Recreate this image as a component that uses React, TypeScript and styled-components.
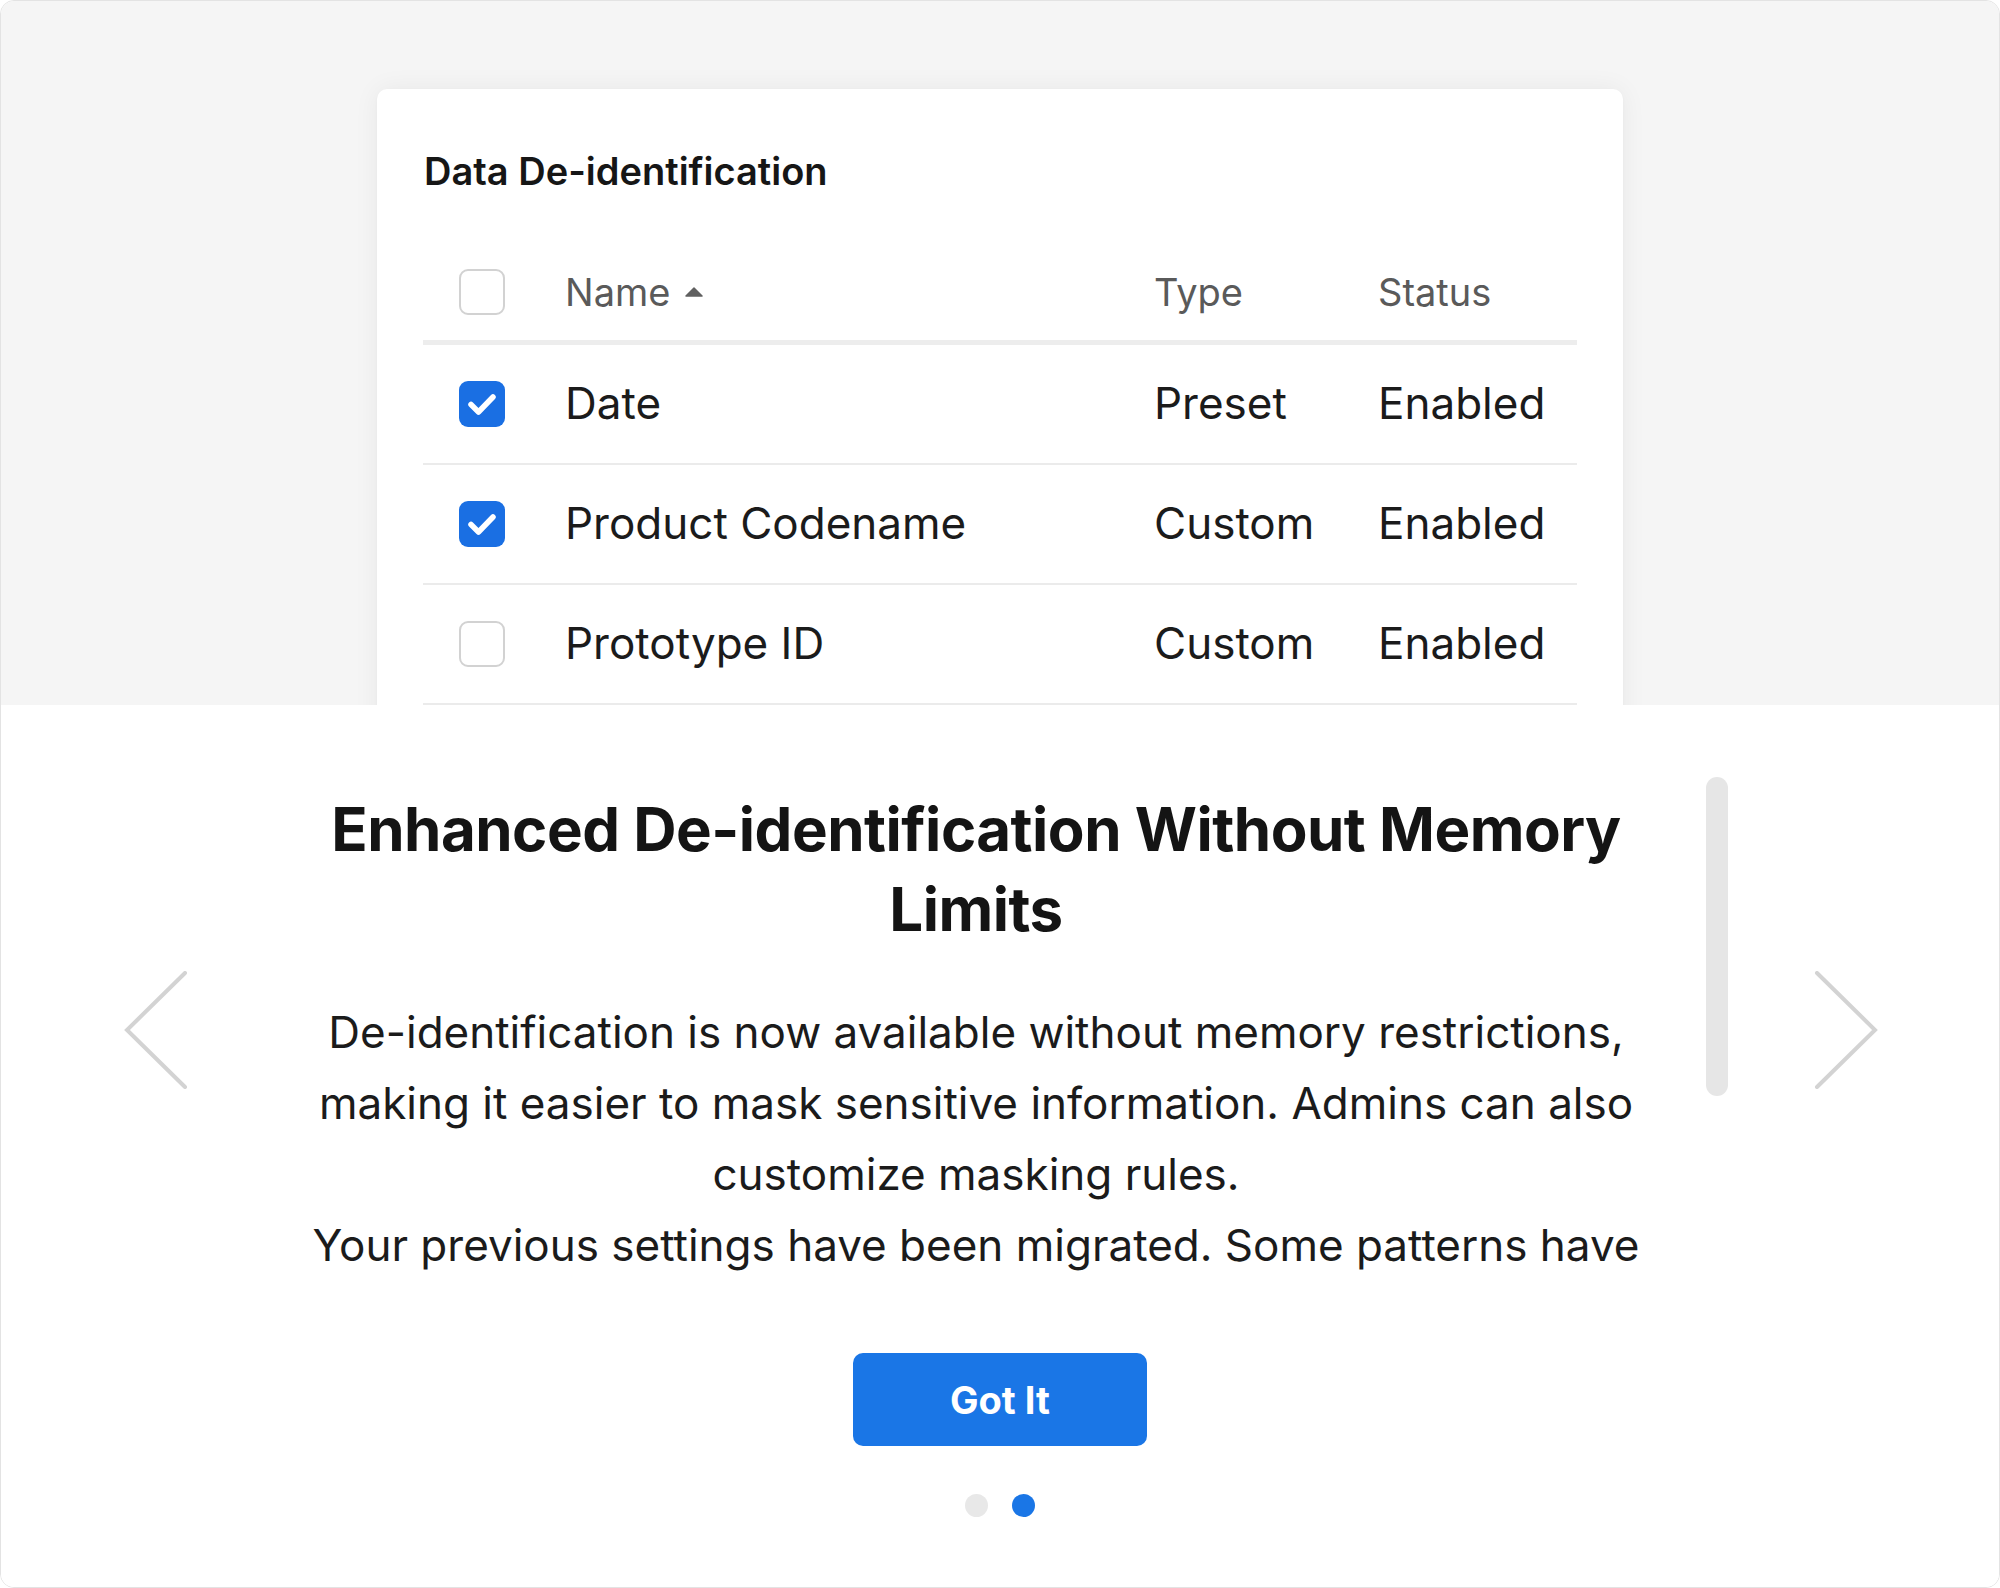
import React from "react";
import styled, { createGlobalStyle } from "styled-components";

const GlobalStyle = createGlobalStyle`
  html, body {
    margin: 0;
    padding: 0;
    background: #ffffff;
  }
  body {
    font-family: Inter, "Noto Sans", "Liberation Sans", sans-serif;
    -webkit-font-smoothing: antialiased;
  }
  * { box-sizing: border-box; }
`;

const Frame = styled.div`
  width: 2000px;
  height: 1588px;
  border: 1px solid #e3e3e3;
  border-radius: 14px;
  overflow: hidden;
  display: flex;
  flex-direction: column;
  background: #ffffff;
`;

const TopArea = styled.div`
  height: 704px;
  flex-shrink: 0;
  background: #f5f5f5;
  overflow: hidden;
  display: flex;
  justify-content: center;
  padding-top: 88px;
`;

const Card = styled.div`
  width: 1246px;
  height: 760px;
  flex-shrink: 0;
  background: #ffffff;
  border-radius: 10px;
  box-shadow: 0 0 26px rgba(0, 0, 0, 0.06), 0 1px 3px rgba(0, 0, 0, 0.03);
  padding: 60px 46px 0 46px;
`;

const CardTitle = styled.h2`
  margin: 0 0 0 1px;
  font-size: 38px;
  line-height: 44px;
  font-weight: 600;
  color: #161616;
`;

const Table = styled.div`
  margin-top: 51px;
  display: flex;
  flex-direction: column;
`;

const Row = styled.div<{ $header?: boolean }>`
  display: grid;
  grid-template-columns: 142px 589px 224px 1fr;
  align-items: center;
  height: ${(p) => (p.$header ? "96px" : "118px")};
  border-bottom: ${(p) => (p.$header ? "5px solid #ededed" : "2px solid #ebebeb")};
  box-sizing: content-box;
`;

const Cell = styled.div<{ $header?: boolean }>`
  display: flex;
  align-items: center;
  font-size: ${(p) => (p.$header ? "38px" : "44px")};
  font-weight: 400;
  color: ${(p) => (p.$header ? "#5a5a5a" : "#1b1b1b")};
  white-space: nowrap;
  margin-top: ${(p) => (p.$header ? "0" : "-3px")};
`;

const CheckCell = styled.div`
  padding-left: 36px;
  display: flex;
  align-items: center;
`;

const Box = styled.div<{ $checked?: boolean }>`
  width: 46px;
  height: 46px;
  border-radius: 9px;
  border: ${(p) => (p.$checked ? "none" : "2px solid #d2d2d2")};
  background: ${(p) => (p.$checked ? "#1a6fe3" : "#ffffff")};
  display: flex;
  align-items: center;
  justify-content: center;
`;

const SortIcon = styled.svg`
  margin-left: 15px;
  width: 18px;
  height: 10px;
`;

const Lower = styled.div`
  flex: 1;
  background: #ffffff;
  display: flex;
  flex-direction: column;
  align-items: center;
  padding-top: 72px;
`;

const CarouselRow = styled.div`
  width: 100%;
  display: flex;
  align-items: center;
  padding: 0 121px 0 123px;
`;

const ArrowButton = styled.button`
  width: 64px;
  height: 118px;
  padding: 0;
  border: none;
  background: transparent;
  flex-shrink: 0;
  margin-bottom: 12px;
  display: flex;
  align-items: center;
  justify-content: center;
  cursor: pointer;
`;

const Viewport = styled.div`
  flex: 1;
  margin: 0 86px 0 94px;
  display: grid;
  grid-template-columns: 1fr 22px;
  column-gap: 36px;
  height: 518px;
`;

const ScrollContent = styled.div`
  height: 518px;
  overflow: hidden;
  text-align: center;
`;

const ScrollTrack = styled.div`
  height: 518px;
  display: flex;
  flex-direction: column;
`;

const ScrollThumb = styled.div`
  width: 22px;
  border-radius: 11px;
  background: #e6e6e6;
`;

const Heading = styled.h1`
  margin: 0;
  padding-top: 12px;
  font-size: 60px;
  line-height: 80px;
  font-weight: 700;
  color: #141414;
  letter-spacing: -0.5px;
`;

const Body = styled.p`
  margin: 48px 0 0 0;
  font-size: 44px;
  line-height: 71px;
  font-weight: 400;
  color: #1b1b1b;
`;

const PrimaryButton = styled.button`
  margin-top: 58px;
  width: 294px;
  height: 93px;
  border: none;
  border-radius: 10px;
  background: #1a76e6;
  color: #ffffff;
  font-family: Inter, "Noto Sans", "Liberation Sans", sans-serif;
  font-size: 38px;
  font-weight: 700;
  cursor: pointer;
`;

const Dots = styled.div`
  margin-top: 48px;
  display: flex;
  gap: 24px;
`;

const Dot = styled.span<{ $active?: boolean }>`
  width: 23px;
  height: 23px;
  border-radius: 50%;
  background: ${(p) => (p.$active ? "#1a76e6" : "#e8e8e8")};
`;

const Check = () => (
  <svg width="46" height="46" viewBox="0 0 46 46">
    <path
      d="M12 23.5 L19.5 31 L34 16"
      fill="none"
      stroke="#ffffff"
      strokeWidth="5.5"
      strokeLinecap="round"
      strokeLinejoin="round"
    />
  </svg>
);

const Chevron = ({ dir }: { dir: "left" | "right" }) => (
  <svg width="64" height="118" viewBox="0 0 64 118">
    <polyline
      points={dir === "left" ? "61,2 3,59 61,116" : "3,2 61,59 3,116"}
      fill="none"
      stroke="#d3d3d3"
      strokeWidth="4"
      strokeLinecap="round"
      strokeLinejoin="miter"
    />
  </svg>
);

const rows = [
  { name: "Date", type: "Preset", status: "Enabled", checked: true },
  { name: "Product Codename", type: "Custom", status: "Enabled", checked: true },
  { name: "Prototype ID", type: "Custom", status: "Enabled", checked: false },
];

// visible height / total content height of the scroll area
const VIEW_H = 518;
const CONTENT_H = 841;

export default function App() {
  return (
    <>
      <GlobalStyle />
      <Frame>
        <TopArea>
          <Card>
            <CardTitle>Data De-identification</CardTitle>
            <Table>
              <Row $header>
                <CheckCell>
                  <Box />
                </CheckCell>
                <Cell $header>
                  Name
                  <SortIcon viewBox="0 0 18 10">
                    <path d="M9 1 L17 9 L1 9 Z" fill="#606060" stroke="#606060" strokeWidth="1.5" strokeLinejoin="round" />
                  </SortIcon>
                </Cell>
                <Cell $header>Type</Cell>
                <Cell $header>Status</Cell>
              </Row>
              {rows.map((r) => (
                <Row key={r.name}>
                  <CheckCell>
                    <Box $checked={r.checked}>{r.checked && <Check />}</Box>
                  </CheckCell>
                  <Cell>{r.name}</Cell>
                  <Cell>{r.type}</Cell>
                  <Cell>{r.status}</Cell>
                </Row>
              ))}
            </Table>
          </Card>
        </TopArea>
        <Lower>
          <CarouselRow>
            <ArrowButton aria-label="Previous">
              <Chevron dir="left" />
            </ArrowButton>
            <Viewport>
              <ScrollContent>
                <Heading>Enhanced De-identification Without Memory Limits</Heading>
                <Body>
                  De-identification is now available without memory restrictions, making it easier to mask
                  sensitive information. Admins can also customize masking rules.
                  <br />
                  Your previous settings have been migrated. Some patterns have been updated to follow the new
                  rule format, so please review them to make sure they still work as expected. You can edit,
                  enable, or disable any rule at any time from the Data De-identification settings page.
                </Body>
              </ScrollContent>
              <ScrollTrack>
                <ScrollThumb style={{ height: Math.round((VIEW_H * VIEW_H) / CONTENT_H) }} />
              </ScrollTrack>
            </Viewport>
            <ArrowButton aria-label="Next">
              <Chevron dir="right" />
            </ArrowButton>
          </CarouselRow>
          <PrimaryButton>Got It</PrimaryButton>
          <Dots>
            <Dot />
            <Dot $active />
          </Dots>
        </Lower>
      </Frame>
    </>
  );
}
